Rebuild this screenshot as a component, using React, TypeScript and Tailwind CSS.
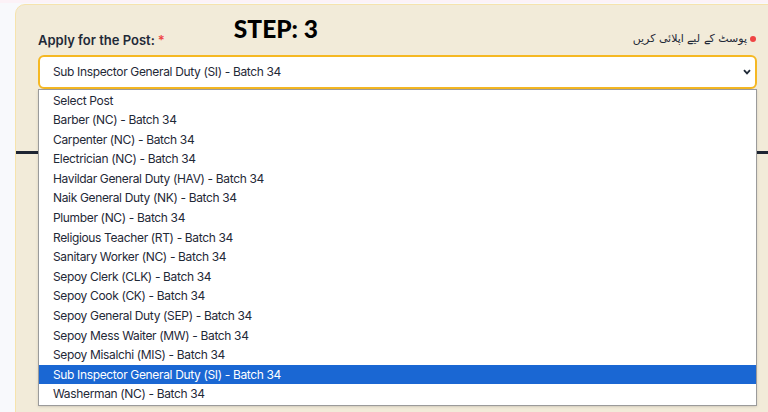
const posts = [
  'Select Post',
  'Barber (NC) - Batch 34',
  'Carpenter (NC) - Batch 34',
  'Electrician (NC) - Batch 34',
  'Havildar General Duty (HAV) - Batch 34',
  'Naik General Duty (NK) - Batch 34',
  'Plumber (NC) - Batch 34',
  'Religious Teacher (RT) - Batch 34',
  'Sanitary Worker (NC) - Batch 34',
  'Sepoy Clerk (CLK) - Batch 34',
  'Sepoy Cook (CK) - Batch 34',
  'Sepoy General Duty (SEP) - Batch 34',
  'Sepoy Mess Waiter (MW) - Batch 34',
  'Sepoy Misalchi (MIS) - Batch 34',
  'Sub Inspector General Duty (SI) - Batch 34',
  'Washerman (NC) - Batch 34',
];

const selected = 'Sub Inspector General Duty (SI) - Batch 34';

function Chevron() {
  return (
    <svg width="8" height="6" viewBox="0 0 8 6" className="text-[#1f2937]">
      <path d="M1 1.2 L4 4.4 L7 1.2" fill="none" stroke="currentColor" strokeWidth="1.8" />
    </svg>
  );
}

export default function App() {
  return (
    <div className="h-[412px] overflow-hidden bg-[#f8f9fc] font-['Inter',sans-serif]">
      <div className="h-[3px] bg-[#fcf2f7]" />
      <div className="ml-[15px] mt-px h-[430px] w-[800px] rounded-[10px] border border-[#f6e3ad] bg-[#f2ebd9] pl-[22px] pt-[12px]">
        <div className="w-[719px]">
          <div className="mb-[6px] flex items-end">
            <label className="mb-[1px] text-[13px] font-semibold leading-4 text-[#1f2937]">
              Apply for the Post:<span className="ml-[3px] text-[#ef4444]">*</span>
            </label>
            <div className="mb-[7px] ml-[69px] font-['Lato',sans-serif] text-[24.5px] font-black leading-none text-black">
              STEP: 3
            </div>
            <div className="ml-auto flex items-center gap-[3px] pr-[1px]">
              <span dir="rtl" className="font-['DejaVu_Sans',sans-serif] text-[11px] leading-5 text-[#1f2937]">
                پوسٹ کے لیے اپلائی کریں
              </span>
              <span className="h-[6px] w-[6px] rounded-full bg-[#ef4444]" />
            </div>
          </div>

          <div className="relative">
            <div className="flex h-[34px] items-center justify-between rounded-[6px] border-2 border-[#f5b823] bg-white pl-[13px] pr-[4px]">
              <span className="text-[12px] tracking-[-0.35px] text-[#1f2937]">{selected}</span>
              <Chevron />
            </div>
            <ul className="absolute left-0 top-full z-10 w-full border border-[#9b9b9b] bg-white py-px shadow-sm">
              {posts.map((p) => (
                <li
                  key={p}
                  className={`h-[19.6px] pl-[14px] text-[12px] leading-[19.6px] tracking-[-0.35px] ${
                    p === selected ? 'bg-[#1a67d3] text-white' : 'text-[#1f2937]'
                  }`}
                >
                  {p}
                </li>
              ))}
            </ul>
          </div>
        </div>
        <div className="-ml-[22px] mt-[62px] h-[3px] bg-[#1e2533]" />
      </div>
    </div>
  );
}
